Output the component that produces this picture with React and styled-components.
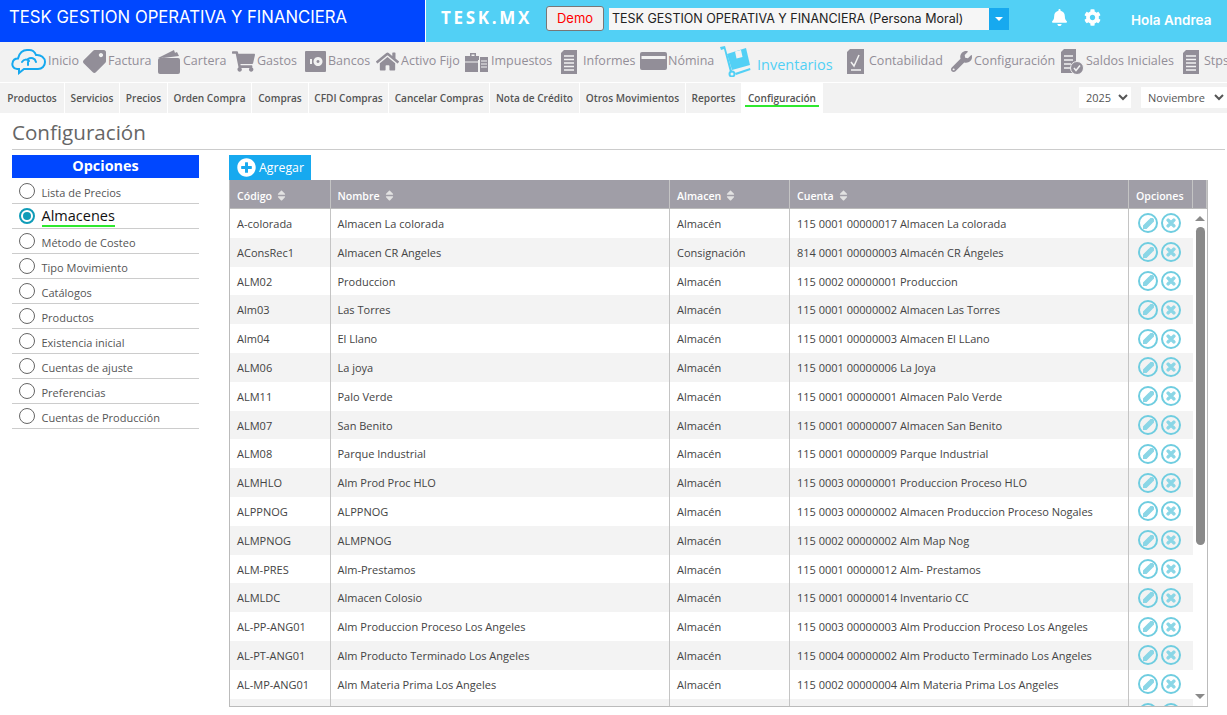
import React from 'react';
import styled, { createGlobalStyle } from 'styled-components';
import { FaBell, FaCog, FaPlusCircle, FaTag, FaShoppingCart, FaHome, FaWrench, FaPencilAlt, FaTimes, FaSort } from 'react-icons/fa';

const GRAY = '#928e98';
const CYAN = '#52d0f5';
const BLUE = '#0047ff';
const SKY = '#17a9ef';

const GlobalStyle = createGlobalStyle`
  html, body { margin: 0; padding: 0; background: #fff; overflow: hidden; }
  body { font-family: "Open Sans", "Liberation Sans", sans-serif; }
  * { box-sizing: border-box; }
`;

const Page = styled.div`
  width: 1227px;
  height: 715px;
  overflow: hidden;
`;

const TopBar = styled.header`
  display: flex;
  height: 42px;
  background: ${CYAN};
`;

const Brand = styled.div`
  flex: none;
  width: 426px;
  padding-left: 9px;
  border-right: 1px solid #fff;
  background: ${BLUE};
  color: #fff;
  font-family: Inter, "Liberation Sans", sans-serif;
  font-size: 16.7px;
  line-height: 35px;
  white-space: nowrap;
`;

const TopTools = styled.div`
  display: flex;
  align-items: center;
  flex: 1;
  padding-left: 15px;
`;

const Logo = styled.div`
  width: 105px;
  color: #fff;
  font-size: 17px;
  font-weight: 700;
  letter-spacing: 2.7px;
  margin-top: -8px;
`;

const DemoButton = styled.button`
  width: 58px;
  height: 25px;
  margin-top: -6px;
  padding: 0;
  border: 1px solid #777;
  border-radius: 3px;
  background: #efefef;
  color: #f00;
  font-family: Inter, sans-serif;
  font-size: 13px;
`;

const CompanyPicker = styled.div`
  display: flex;
  flex: none;
  width: 400px;
  height: 22px;
  margin: -5px 0 0 5px;
`;

const CompanyName = styled.div`
  flex: 1;
  padding-left: 3px;
  background: #f6f6f6;
  color: #222;
  font-family: Inter, sans-serif;
  font-size: 12.5px;
  line-height: 22px;
  white-space: nowrap;
`;

const CompanyCaret = styled.div`
  display: flex;
  align-items: center;
  justify-content: center;
  width: 20px;
  background: ${SKY};
  &::after {
    content: "";
    border-top: 4px solid #fff;
    border-left: 4px solid transparent;
    border-right: 4px solid transparent;
  }
`;

const TopIcons = styled.div`
  display: flex;
  gap: 16px;
  margin: -7px 0 0 42px;
  color: #fff;
  font-size: 17px;
  line-height: 1;
`;

const Greeting = styled.div`
  margin: -3px 0 0 30px;
  color: #fff;
  font-family: Inter, sans-serif;
  font-size: 13.5px;
  font-weight: 600;
  white-space: nowrap;
`;

const MainNav = styled.nav`
  display: flex;
  align-items: flex-start;
  height: 41px;
  padding: 5px 0 0 11px;
  border-bottom: 1px solid #fff;
  background: #f2f2f2;
  overflow: hidden;
`;

const NavItem = styled.a`
  display: flex;
  flex: none;
  gap: ${p => p.$gap}px;
  width: ${p => p.$width}px;
  height: 30px;
  color: ${p => (p.$active ? CYAN : GRAY)};
  font-size: ${p => (p.$active ? 14.5 : 12.5)}px;
  font-weight: 500;
  line-height: ${p => (p.$active ? 35 : 28)}px;
  white-space: nowrap;
`;

const NavIcon = styled.span`
  display: flex;
  align-items: center;
  justify-content: center;
  flex: none;
  width: ${p => p.$size}px;
  height: 28px;
  font-size: ${p => p.$font || 23}px;
`;

const SubNav = styled.div`
  display: flex;
  align-items: stretch;
  height: 30px;
  background: #f2f2f2;
`;

const SubItem = styled.a`
  display: flex;
  justify-content: center;
  align-items: center;
  width: ${p => p.$width}px;
  border-right: 1px solid #fff;
  background: ${p => (p.$active ? '#fff' : 'transparent')};
  color: #555;
  font-size: 10.1px;
  font-weight: 600;
  white-space: nowrap;
`;

const Underlined = styled.span`
  display: inline-block;
  border-bottom: 2px solid #2fe82f;
`;

const SubActive = styled(Underlined)`
  padding: 1px 3px 0;
`;

const Periods = styled.div`
  display: flex;
  gap: 10px;
  margin-left: auto;
  padding-top: 4px;
`;

const PeriodSelect = styled.select`
  width: ${p => p.$width}px;
  height: 21px;
  padding-left: 3px;
  border: none;
  background: #fff;
  color: #555;
  font-family: "Open Sans", sans-serif;
  font-size: 11px;
`;

const Content = styled.main`
  padding: 7px 2px 0 12px;
`;

const Title = styled.h1`
  height: 30px;
  margin: 0 0 5px;
  border-bottom: 1px solid #ccc;
  color: #666;
  font-size: 20.6px;
  font-weight: 500;
  line-height: 24px;
`;

const Columns = styled.div`
  display: flex;
  gap: 30px;
`;

const SidePanel = styled.aside`
  flex: none;
  width: 187px;
`;

const SideTitle = styled.div`
  height: 24px;
  border-bottom: 1px solid #fff;
  background: ${BLUE};
  color: #fff;
  font-size: 14.4px;
  font-weight: 700;
  line-height: 22px;
  text-align: center;
`;

const SideRow = styled.div`
  display: flex;
  align-items: center;
  gap: 6.5px;
  height: 25px;
  padding-left: 7px;
  border-bottom: 1px solid #ccc;
  color: ${p => (p.$selected ? '#111' : '#555')};
  font-size: ${p => (p.$selected ? 14.5 : 11)}px;
  font-weight: ${p => (p.$selected ? 500 : 400)};
`;

const SideLabel = styled.span`
  padding-top: 2px;
`;

const Radio = styled.span`
  position: relative;
  flex: none;
  width: 16px;
  height: 16px;
  border: 1px solid ${p => (p.$selected ? '#0f9cb8' : '#666')};
  border-radius: 50%;
  background: #fff;
  ${p => p.$selected && `
    border-width: 2px;
    &::after {
      content: "";
      position: absolute;
      inset: 2px;
      border-radius: 50%;
      background: #0f9cb8;
    }
  `}
`;

const TablePanel = styled.section`
  flex: none;
  width: 979px;
`;

const AddButton = styled.button`
  display: flex;
  align-items: center;
  gap: 3px;
  width: 82px;
  height: 25px;
  padding: 0 0 0 8px;
  border: none;
  background: ${SKY};
  color: #fff;
  font-family: "Open Sans", sans-serif;
  font-size: 12.3px;
  svg { font-size: 19px; }
`;

const gridColumns = '100.5px 339.5px 120px 339px 64px';

const TableFrame = styled.div`
  height: 527px;
  border: 1px solid #bbb;
  border-top: none;
`;

const HeadRow = styled.div`
  display: grid;
  grid-template-columns: ${gridColumns} 1fr;
  height: 29px;
  background: #a09ea7;
  border-bottom: 1px solid #bbb;
`;

const HeadCell = styled.div`
  display: flex;
  align-items: center;
  gap: 3px;
  padding: 3px 0 0 7px;
  border-right: 1px solid #c4c4c4;
  color: #fff;
  font-size: 10.6px;
  font-weight: 600;
  svg { color: #e2e2e2; font-size: 13px; }
`;

const TableBody = styled.div`
  display: flex;
  height: 497px;
`;

const RowList = styled.div`
  flex: 1;
  min-width: 0;
  overflow: hidden;
`;

const ScrollRail = styled.div`
  display: flex;
  flex-direction: column;
  align-items: center;
  flex: none;
  width: 14px;
  padding: 7px 0;
`;

const ScrollArrow = styled.span`
  flex: none;
  width: 0;
  height: 0;
  margin-top: ${p => (p.$down ? 'auto' : '0')};
  border-left: 5px solid transparent;
  border-right: 5px solid transparent;
  border-top: ${p => (p.$down ? '5px solid #8a8a8a' : 'none')};
  border-bottom: ${p => (p.$down ? 'none' : '5px solid #8a8a8a')};
`;

const ScrollThumb = styled.span`
  flex: none;
  width: 9px;
  height: 318px;
  margin-top: 6px;
  border-radius: 5px;
  background: #8a8a8a;
`;

const Row = styled.div`
  display: grid;
  grid-template-columns: ${gridColumns};
  height: 28.8px;
  background: ${p => (p.$odd ? '#f3f3f3' : '#fff')};
`;

const Cell = styled.div`
  padding: 1px 0 0 7px;
  border-right: 1px solid #c4c4c4;
  color: #444;
  font-size: 11px;
  line-height: 28px;
  white-space: nowrap;
  overflow: hidden;
`;

const ActionCell = styled.div`
  display: flex;
  gap: 3px;
  align-items: center;
  padding-left: 9px;
`;

const RoundAction = styled.span`
  display: flex;
  align-items: center;
  justify-content: center;
  width: 20px;
  height: 20px;
  border: 2.5px solid #6fcde0;
  border-radius: 50%;
  color: #8ad6e6;
  font-size: ${p => p.$size}px;
  svg { stroke: currentColor; stroke-width: 50; }
`;

const Svg = ({ w, h, children, ...rest }) => (
  <svg width={w} height={h} viewBox={`0 0 ${w} ${h}`} {...rest}>{children}</svg>
);

const CloudIcon = () => (
  <Svg w={35} h={28} fill="none" stroke={SKY} strokeWidth="2" strokeLinecap="round">
    <path d="M8 22 H6 C2 22 1 18 1.500 16 C2 13 4 11.500 7 11.500 C8 6 12 2.500 17 3 C21 2.500 24 5 25 8 C30 7.500 34 11 34 15 C34 19 31 22 27 22 H13 L8 26 Z" />
    <path d="M11 15 C13 12 16 12 18 14 M17 12 C20 10 24 11 25 15 M17 15 V18" />
  </Svg>
);

const WalletIcon = () => (
  <Svg w={24} h={28} fill={GRAY}>
    <path d="M1 11 L17 3 L19 9 L4 11 Z M6 11 L20 5 L22 9 Z" />
    <rect x="1" y="11" width="22" height="16" rx="2" />
  </Svg>
);

const SafeIcon = () => (
  <Svg w={23} h={28} fill={GRAY}>
    <path fillRule="evenodd" d="M2 4 H21 A1 1 0 0 1 22 5 V24 A1 1 0 0 1 21 25 H2 A1 1 0 0 1 1 24 V5 A1 1 0 0 1 2 4 Z M14 10 A4.500 4.500 0 1 0 14.010 10 Z M14 13 A1.500 1.500 0 1 1 13.990 13 Z M6 12 V17 H8 V12 Z" />
  </Svg>
);

const BriefcaseIcon = () => (
  <Svg w={24} h={28} fill={GRAY}>
    <path fillRule="evenodd" d="M1 9 H6 V6 H12 V9 H15 V13 H14 V25 H1 Z M7.500 7.500 V9 H10.500 V7.500 Z" />
    <path d="M16 10 H24 V25 H16 Z" />
    <path d="M17 14 H23 M17 17 H23 M17 20 H23" stroke="#f2f2f2" />
    <path d="M1 15 H14" stroke="#f2f2f2" />
  </Svg>
);

const PageIcon = () => (
  <Svg w={18} h={28} fill={GRAY}>
    <path d="M4 3 H17 V27 H1 V6 Z" />
    <path d="M4 9 H14 M4 12.500 H14 M4 16 H14 M4 19.500 H14 M4 23 H14" stroke="#f2f2f2" strokeWidth="1.500" />
  </Svg>
);

const CardIcon = () => (
  <Svg w={27} h={28} fill={GRAY}>
    <path fillRule="evenodd" d="M2 5 H25 A2 2 0 0 1 27 7 V21 A2 2 0 0 1 25 23 H2 A2 2 0 0 1 0 21 V7 A2 2 0 0 1 2 5 Z M1.500 9 V12 H25.500 V9 Z" />
  </Svg>
);

const TrolleyIcon = () => (
  <Svg w={31} h={32} fill={CYAN}>
    <path d="M0 2 L5 1 L12 26 L10 27 L4 4 L1 5 Z" />
    <path d="M7 9 L26 3 L30 20 L12 25 Z" />
    <path d="M15 28 L30 23 L30.500 25 L16 30 Z" />
    <circle cx="12" cy="29" r="2.500" fill="none" stroke={CYAN} strokeWidth="2" />
    <path d="M15 6.500 L21 5 L22.500 12 L16.500 13.500 Z" fill="#f2f2f2" />
  </Svg>
);

const LedgerIcon = () => (
  <Svg w={19} h={28} fill={GRAY}>
    <path d="M4 2 H18 V27 H1 V5 Z" />
    <path d="M5 15 L8 19 L13 8 M5 23 H15" fill="none" stroke="#f2f2f2" strokeWidth="1.500" />
  </Svg>
);

const CheckDocIcon = () => (
  <Svg w={23} h={28} fill={GRAY}>
    <path d="M3 2 H15 V26 H0 V5 Z" />
    <path d="M3 9 H12 M3 13 H12 M3 17 H10 M3 21 H9" stroke="#f2f2f2" strokeWidth="1.500" />
    <circle cx="16" cy="21" r="6.500" stroke="#f2f2f2" />
    <path d="M13 21 L15 23.500 L19 18.500" fill="none" stroke="#f2f2f2" strokeWidth="1.500" />
  </Svg>
);

const navItems = [
  { label: 'Inicio', width: 72, size: 35, gap: 2, icon: <CloudIcon /> },
  { label: 'Factura', width: 74, size: 23, gap: 2, icon: <FaTag style={{ transform: 'scaleX(-1)' }} /> },
  { label: 'Cartera', width: 74, size: 24, gap: 2, icon: <WalletIcon /> },
  { label: 'Gastos', width: 73, size: 25, gap: 1, icon: <FaShoppingCart /> },
  { label: 'Bancos', width: 71, size: 23, gap: 1, icon: <SafeIcon /> },
  { label: 'Activo Fijo', width: 89, size: 25, gap: 1, icon: <FaHome /> },
  { label: 'Impuestos', width: 96, size: 24, gap: 3, icon: <BriefcaseIcon /> },
  { label: 'Informes', width: 80, size: 18, gap: 5, icon: <PageIcon /> },
  { label: 'Nómina', width: 80, size: 27, gap: 1, icon: <CardIcon /> },
  { label: 'Inventarios', width: 126, size: 31, gap: 6, icon: <TrolleyIcon />, active: true },
  { label: 'Contabilidad', width: 103, size: 19, gap: 4, icon: <LedgerIcon /> },
  { label: 'Configuración', width: 112, size: 24, gap: 1, font: 21, icon: <FaWrench /> },
  { label: 'Saldos Iniciales', width: 121, size: 23, gap: 2, icon: <CheckDocIcon /> },
  { label: 'Stps', width: 60, size: 18, gap: 4, icon: <PageIcon /> },
];

const subItems = [
  ['Productos', 65], ['Servicios', 55], ['Precios', 48], ['Orden Compra', 84], ['Compras', 57],
  ['CFDI Compras', 80], ['Cancelar Compras', 101], ['Nota de Crédito', 90], ['Otros Movimientos', 106], ['Reportes', 56],
];

const sideItems = [
  'Lista de Precios', 'Almacenes', 'Método de Costeo', 'Tipo Movimiento', 'Catálogos',
  'Productos', 'Existencia inicial', 'Cuentas de ajuste', 'Preferencias', 'Cuentas de Producción',
];

const rows = [
  ['A-colorada', 'Almacen La colorada', 'Almacén', '115 0001 00000017 Almacen La colorada'],
  ['AConsRec1', 'Almacen CR Angeles', 'Consignación', '814 0001 00000003 Almacén CR Ángeles'],
  ['ALM02', 'Produccion', 'Almacén', '115 0002 00000001 Produccion'],
  ['Alm03', 'Las Torres', 'Almacén', '115 0001 00000002 Almacen Las Torres'],
  ['Alm04', 'El Llano', 'Almacén', '115 0001 00000003 Almacen El LLano'],
  ['ALM06', 'La joya', 'Almacén', '115 0001 00000006 La Joya'],
  ['ALM11', 'Palo Verde', 'Almacén', '115 0001 00000001 Almacen Palo Verde'],
  ['ALM07', 'San Benito', 'Almacén', '115 0001 00000007 Almacen San Benito'],
  ['ALM08', 'Parque Industrial', 'Almacén', '115 0001 00000009 Parque Industrial'],
  ['ALMHLO', 'Alm Prod Proc HLO', 'Almacén', '115 0003 00000001 Produccion Proceso HLO'],
  ['ALPPNOG', 'ALPPNOG', 'Almacén', '115 0003 00000002 Almacen Produccion Proceso Nogales'],
  ['ALMPNOG', 'ALMPNOG', 'Almacén', '115 0002 00000002 Alm Map Nog'],
  ['ALM-PRES', 'Alm-Prestamos', 'Almacén', '115 0001 00000012 Alm- Prestamos'],
  ['ALMLDC', 'Almacen Colosio', 'Almacén', '115 0001 00000014 Inventario CC'],
  ['AL-PP-ANG01', 'Alm Produccion Proceso Los Angeles', 'Almacén', '115 0003 00000003 Alm Produccion Proceso Los Angeles'],
  ['AL-PT-ANG01', 'Alm Producto Terminado Los Angeles', 'Almacén', '115 0004 00000002 Alm Producto Terminado Los Angeles'],
  ['AL-MP-ANG01', 'Alm Materia Prima Los Angeles', 'Almacén', '115 0002 00000004 Alm Materia Prima Los Angeles'],
  ['', '', '', ''],
];

export default function App() {
  return (
    <Page>
      <GlobalStyle />
      <TopBar>
        <Brand>TESK GESTION OPERATIVA Y FINANCIERA</Brand>
        <TopTools>
          <Logo>TESK.MX</Logo>
          <DemoButton>Demo</DemoButton>
          <CompanyPicker>
            <CompanyName>TESK GESTION OPERATIVA Y FINANCIERA (Persona Moral)</CompanyName>
            <CompanyCaret />
          </CompanyPicker>
          <TopIcons>
            <FaBell />
            <FaCog />
          </TopIcons>
          <Greeting>Hola Andrea</Greeting>
        </TopTools>
      </TopBar>

      <MainNav>
        {navItems.map(item => (
          <NavItem key={item.label} $width={item.width} $gap={item.gap} $active={item.active}>
            <NavIcon $size={item.size} $font={item.font}>{item.icon}</NavIcon>
            {item.label}
          </NavItem>
        ))}
      </MainNav>

      <SubNav>
        {subItems.map(([label, width]) => (
          <SubItem key={label} $width={width}>{label}</SubItem>
        ))}
        <SubItem $width={81} $active><SubActive>Configuración</SubActive></SubItem>
        <Periods>
          <PeriodSelect $width={52} defaultValue="2025"><option>2025</option></PeriodSelect>
          <PeriodSelect $width={86} defaultValue="Noviembre"><option>Noviembre</option></PeriodSelect>
        </Periods>
      </SubNav>

      <Content>
        <Title>Configuración</Title>
        <Columns>
          <SidePanel>
            <SideTitle>Opciones</SideTitle>
            {sideItems.map(label => {
              const selected = label === 'Almacenes';
              return (
                <SideRow key={label} $selected={selected}>
                  <Radio $selected={selected} />
                  {selected ? <Underlined>{label}</Underlined> : <SideLabel>{label}</SideLabel>}
                </SideRow>
              );
            })}
          </SidePanel>

          <TablePanel>
            <AddButton><FaPlusCircle /> Agregar</AddButton>
            <TableFrame>
              <HeadRow>
                <HeadCell>Código <FaSort /></HeadCell>
                <HeadCell>Nombre <FaSort /></HeadCell>
                <HeadCell>Almacen <FaSort /></HeadCell>
                <HeadCell>Cuenta <FaSort /></HeadCell>
                <HeadCell>Opciones</HeadCell>
                <HeadCell />
              </HeadRow>
              <TableBody>
                <RowList>
                  {rows.map((row, index) => (
                    <Row key={index} $odd={index % 2 === 1}>
                      {row.map((text, col) => <Cell key={col}>{text}</Cell>)}
                      <ActionCell>
                        <RoundAction $size={11}><FaPencilAlt /></RoundAction>
                        <RoundAction $size={12}><FaTimes /></RoundAction>
                      </ActionCell>
                    </Row>
                  ))}
                </RowList>
                <ScrollRail>
                  <ScrollArrow />
                  <ScrollThumb />
                  <ScrollArrow $down />
                </ScrollRail>
              </TableBody>
            </TableFrame>
          </TablePanel>
        </Columns>
      </Content>
    </Page>
  );
}
